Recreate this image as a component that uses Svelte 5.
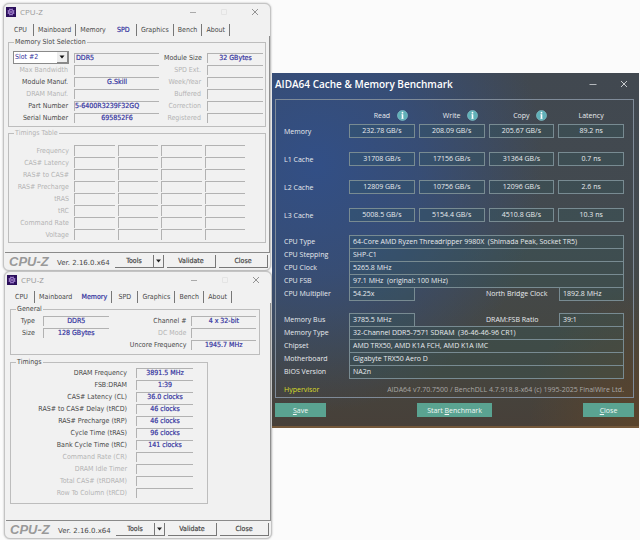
<script>
  const slotRows = [
    ['Max Bandwidth', '', 'SPD Ext.', ''],
    ['Module Manuf.', 'G.Skill', 'Week/Year', ''],
    ['DRAM Manuf.', '', 'Buffered', ''],
    ['Part Number', '5-6400R3239F32GQ', 'Correction', ''],
    ['Serial Number', '695852F6', 'Registered', '']
  ];
  const spdTimings = ['Frequency', 'CAS# Latency', 'RAS# to CAS#', 'RAS# Precharge', 'tRAS', 'tRC', 'Command Rate', 'Voltage'];
  const timings = [
    ['DRAM Frequency', '3891.5 MHz'],
    ['FSB:DRAM', '1:39'],
    ['CAS# Latency (CL)', '36.0 clocks'],
    ['RAS# to CAS# Delay (tRCD)', '46 clocks'],
    ['RAS# Precharge (tRP)', '46 clocks'],
    ['Cycle Time (tRAS)', '96 clocks'],
    ['Bank Cycle Time (tRC)', '141 clocks'],
    ['Command Rate (CR)', ''],
    ['DRAM Idle Timer', ''],
    ['Total CAS# (tRDRAM)', ''],
    ['Row To Column (tRCD)', '']
  ];
  const tabs = ['CPU', 'Mainboard', 'Memory', 'SPD', 'Graphics', 'Bench', 'About'];
  const bench = [
    ['Memory', '232.78 GB/s', '208.09 GB/s', '205.67 GB/s', '89.2 ns'],
    ['L1 Cache', '31708 GB/s', '17156 GB/s', '31364 GB/s', '0.7 ns'],
    ['L2 Cache', '12809 GB/s', '10756 GB/s', '12096 GB/s', '2.6 ns'],
    ['L3 Cache', '5008.5 GB/s', '5154.4 GB/s', '4510.8 GB/s', '10.3 ns']
  ];
  const cpuSpecs = [
    ['CPU Type', '64-Core AMD Ryzen Threadripper 9980X  (Shimada Peak, Socket TR5)'],
    ['CPU Stepping', 'SHP-C1'],
    ['CPU Clock', '5265.8 MHz'],
    ['CPU FSB', '97.1 MHz  (original: 100 MHz)'],
    ['CPU Multiplier', '54.25x', 'North Bridge Clock', '1892.8 MHz']
  ];
  const memSpecs = [
    ['Memory Bus', '3785.5 MHz', 'DRAM:FSB Ratio', '39:1'],
    ['Memory Type', '32-Channel DDR5-7571 SDRAM  (36-46-46-96 CR1)'],
    ['Chipset', 'AMD TRX50, AMD K1A FCH, AMD K1A IMC'],
    ['Motherboard', 'Gigabyte TRX50 Aero D'],
    ['BIOS Version', 'NA2n']
  ];
</script>

{#snippet titlebar()}
  <header class="titlebar">
    <svg class="chip" viewBox="0 0 10 10" aria-hidden="true">
      <rect width="10" height="10" fill="#2c105c" />
      <path d="M3.5 1.5v7M5 1.3v7.4M6.5 1.5v7M1.5 3.5h7M1.3 5h7.4M1.5 6.5h7" stroke="#a884d8" stroke-width=".6" />
      <circle cx="5" cy="5" r="2.5" fill="#48217f" stroke="#c3a6ea" stroke-width=".8" />
      <path d="M3.4 5h3.2" stroke="#e0d0f6" stroke-width=".8" />
    </svg>
    <h2>CPU-Z</h2>
    <button class="cap" aria-label="Minimize"><svg viewBox="0 0 8 8"><path d="M1 4.5h6" stroke="#aaa" /></svg></button>
    <button class="cap" aria-label="Maximize"><svg viewBox="0 0 8 8"><path d="M1.5 1.5h5v5h-5z" stroke="#e4e4e4" fill="none" /></svg></button>
    <button class="cap" aria-label="Close window"><svg viewBox="0 0 8 8"><path d="M1 1l6 6M7 1l-6 6" stroke="#888" stroke-width=".9" /></svg></button>
  </header>
{/snippet}

{#snippet tabbar(active)}
  <div class="tabs" role="tablist">
    {#each tabs as t, i}
      <button role="tab" class="tab" class:active={t === active} class:before={tabs[i + 1] === active} aria-selected={t === active}>{t}</button>
    {/each}
  </div>
{/snippet}

{#snippet footer()}
  <footer class="foot">
    <strong class="logo">CPU-Z</strong>
    <span class="ver">Ver. 2.16.0.x64</span>
    <div class="split">
      <button class="btn">Tools</button>
      <button class="btn drop" aria-label="More tools"><svg viewBox="0 0 5 4"><path d="M0 .5h5L2.5 3.5z" fill="#222" /></svg></button>
    </div>
    <button class="btn">Validate</button>
    <button class="btn">Close</button>
  </footer>
{/snippet}

{#snippet specs(rows)}
  <dl class="specs">
    {#each rows as r}
      <dt>{r[0]}</dt>
      {#if r[2]}
        <dd>{r[1]}</dd>
        <dt class="second">{r[2]}</dt>
        <dd>{r[3]}</dd>
      {:else}
        <dd class="wide">{r[1]}</dd>
      {/if}
    {/each}
  </dl>
{/snippet}

<main class="desktop">
  <div class="left">
    <section class="win first">
      {@render titlebar()}
      {@render tabbar('SPD')}
      <div class="page">
        <fieldset class="slots">
          <legend>Memory Slot Selection</legend>
          <div class="slotgrid">
            <div class="pick">
              <select aria-label="Memory slot"><option>Slot #2</option></select>
              <svg viewBox="0 0 5 4" aria-hidden="true"><path d="M0 .5h5L2.5 3.5z" fill="#111" /></svg>
            </div>
            <span class="field start">DDR5</span>
            <span class="label">Module Size</span>
            <span class="field">32 GBytes</span>
            {#each slotRows as r}
              <span class="label" class:off={!r[1]}>{r[0]}</span>
              <span class="field" class:long={r[1].length > 12}>{r[1]}</span>
              <span class="label off">{r[2]}</span>
              <span class="field">{r[3]}</span>
            {/each}
          </div>
        </fieldset>
        <fieldset class="table">
          <legend class="off">Timings Table</legend>
          <table class="spd">
            <tbody>
              {#each spdTimings as t}
                <tr>
                  <th scope="row">{t}</th>
                  {#each [0, 1, 2, 3] as c (c)}<td><span class="field"></span></td>{/each}
                </tr>
              {/each}
            </tbody>
          </table>
        </fieldset>
      </div>
      {@render footer()}
    </section>

    <section class="win second-win">
      {@render titlebar()}
      {@render tabbar('Memory')}
      <div class="page">
        <fieldset class="general">
          <legend>General</legend>
          <div class="gengrid">
            <span class="label">Type</span><span class="field">DDR5</span>
            <span class="label">Channel #</span><span class="field">4 x 32-bit</span>
            <span class="label">Size</span><span class="field">128 GBytes</span>
            <span class="label off">DC Mode</span><span class="field"></span>
            <span class="label uncore">Uncore Frequency</span><span class="field">1945.7 MHz</span>
          </div>
        </fieldset>
        <fieldset class="timings">
          <legend>Timings</legend>
          <div class="timegrid">
            {#each timings as [k, v]}
              <span class="label" class:off={!v}>{k}</span>
              <span class="field">{v}</span>
            {/each}
          </div>
        </fieldset>
      </div>
      {@render footer()}
    </section>
  </div>

  <section class="aida">
    <header class="atitle">
      <h1>AIDA64 Cache &amp; Memory Benchmark</h1>
      <button class="cap" aria-label="Minimize"><svg viewBox="0 0 8 8"><path d="M.5 4.5h7" stroke="#b4b8bc" /></svg></button>
      <button class="cap" aria-label="Close window"><svg viewBox="0 0 8 8"><path d="M1 1l6 6M7 1l-6 6" stroke="#d8dadc" stroke-width=".9" /></svg></button>
    </header>
    <div class="panel">
      <table class="bench">
        <thead>
          <tr>
            <td></td>
            {#each ['Read', 'Write', 'Copy', 'Latency'] as h}
              <th scope="col">
                <div class="colhead">
                  <span class="name">{h}</span>
                  {#if h !== 'Latency'}
                    <svg class="info" viewBox="0 0 11 11" aria-hidden="true">
                      <circle cx="5.5" cy="5.5" r="5" fill="#5fb0b8" stroke="#8cc9d0" stroke-width=".6" />
                      <circle cx="5.5" cy="2.7" r=".9" fill="#fff" />
                      <path d="M5.5 4.3v4.4" stroke="#fff" stroke-width="1.6" />
                      <path d="M4.4 4.6h1.2M4.4 8.5h2.2" stroke="#fff" stroke-width=".5" />
                    </svg>
                  {/if}
                </div>
              </th>
            {/each}
          </tr>
        </thead>
        <tbody>
          {#each bench as [name, ...vals]}
            <tr>
              <th scope="row">{name}</th>
              {#each vals as v}<td><span class="box">{v}</span></td>{/each}
            </tr>
          {/each}
        </tbody>
      </table>
      {@render specs(cpuSpecs)}
      {@render specs(memSpecs)}
      <div class="credits">
        <span class="hyper">Hypervisor</span>
        <span>AIDA64 v7.70.7500 / BenchDLL 4.7.918.8-x64 (c) 1995-2025 FinalWire Ltd.</span>
      </div>
    </div>
    <div class="actions">
      <button><u>S</u>ave</button>
      <button class="startb">Start <u>B</u>enchmark</button>
      <button><u>C</u>lose</button>
    </div>
  </section>
</main>

<style>
  :global(body) { margin: 0; background: #fbfbfb; }
  * { box-sizing: border-box; }
  button { font: inherit; color: inherit; background: none; border: 0; padding: 0; margin: 0; }
  svg { display: block; }
  .desktop { display: flex; align-items: flex-start; padding: 3px 1px 2px 0; }
  .left { flex: 0 0 272px; font: 7px/12px "DejaVu Sans Condensed", "DejaVu Sans", sans-serif; color: #484848; }

  .win { background: #f1f1f1; border: 1px solid #c4c4c4; border-radius: 6px; box-shadow: 0 0 2px #aaa; }
  .first { margin: 0 1px 0 3px; }
  .second-win { margin: 0 0 0 4px; }
  .titlebar { display: flex; align-items: center; height: 15px; padding-left: 2px; }
  .chip { width: 10px; height: 10px; }
  h2 { flex: 1; margin: 0 0 0 4px; font: 8px/14px "Open Sans", sans-serif; color: #999; }
  .cap { display: grid; place-items: center; width: 31px; height: 14px; }
  .cap svg { width: 8px; height: 8px; }
  .tabs { display: flex; margin: 5px 40px 0 4px; height: 12px; }
  .second-win .tabs { margin-top: 4px; margin-right: 39px; }
  .tab { flex: 1 1 auto; min-width: 26px; text-align: center; padding: 0 3px; border-right: 1px solid #777; }
  .tab.active { color: #3434a0; -webkit-text-stroke: .2px #3434a0; }
  .tab.before { border-right-color: transparent; }
  .page { margin-left: 1px; padding: 2px 3px 9px 3px; border-right: 1px solid #8e8e8e; border-bottom: 1px solid #8a8a8a; }
  .second-win .page { padding: 2px 3px 16px 4px; }

  fieldset { min-width: 0; margin: 0; border: 1px solid #bdbdbd; padding: 6px 2px 2px 4px; }
  legend { margin-left: 1px; padding: 0 1px; line-height: 8px; }
  .label { text-align: right; padding-right: 1px; white-space: nowrap; }
  .off, .spd th { color: #b4b4b4; }
  .field { display: block; height: 10px; margin-top: 1px; border: solid #b2b2b2; border-width: 1px 0 0 1px; color: #3434a0; line-height: 9px; text-align: center; white-space: nowrap; -webkit-text-stroke: .2px #3434a0; }
  .start { text-align: left; padding-left: 1px; }
  .long { text-align: left; }
  .slotgrid { display: grid; grid-template-columns: 56px 85fr 38px 56fr; column-gap: 5px; grid-auto-rows: 12px; }
  .pick { position: relative; height: 13px; margin-top: -1px; }
  select { display: block; width: 100%; height: 13px; appearance: none; border: 1px solid #8a8a8a; border-radius: 0; background: #fff; font: inherit; line-height: 11px; color: #3434a0; padding: 0 0 0 1px; margin: 0; }
  .pick svg { position: absolute; right: 1px; top: 1px; width: 11px; height: 11px; padding: 3px 2px; background: #eee; border: solid #888; border-width: 0 1px 1px 0; pointer-events: none; overflow: visible; }
  .table { margin-top: 2px; padding: 8px 20px 1px 0; }
  .table legend { margin-left: 5px; }
  table { border-collapse: collapse; table-layout: fixed; width: 100%; }
  td, th { padding: 0; font-weight: normal; }
  .spd th { width: 62px; padding-right: 2px; text-align: right; height: 12px; }
  .spd td { height: 12px; vertical-align: top; padding-left: 3px; }
  .spd .field { margin-top: 0; height: 11px; }
  .general { margin-right: 7px; padding: 2px 3px 3px 4px; }
  .gengrid { display: grid; grid-template-columns: 20px 67fr 66px 67fr; column-gap: 8px; grid-auto-rows: 12px; }
  .gengrid .label { padding: 0; }
  .gengrid .label:nth-child(4n + 3), .gengrid .uncore { margin-right: -4px; }
  .gengrid .uncore { grid-column: 1 / 4; }
  .timings { margin: 3px 59px 0 0; padding: 1px 14px 4px 4px; }
  .timegrid { display: grid; grid-template-columns: 1fr 57px; column-gap: 8px; grid-auto-rows: 12px; }

  .foot { display: flex; align-items: center; gap: 3px; height: 17px; padding: 0 2px 0 5px; }
  .logo { flex: 0 0 45px; font: italic bold 13px/15px "Liberation Sans", sans-serif; color: #999; }
  .ver { flex: 1; font: 7px/12px "DejaVu Sans", sans-serif; white-space: nowrap; padding-top: 3px; }
  .btn { width: 49px; height: 13px; border: solid #777; border-width: 0 1px 1px 0; -webkit-text-stroke: .2px #484848; }
  .split { display: flex; width: 49px; }
  .split .btn { width: 39px; }
  .split .drop { width: 10px; display: grid; place-items: center; }
  .drop svg { width: 5px; height: 4px; }

  .aida {
    flex: 1; min-width: 0; margin-top: 70px; padding: 0 5px 9px 3px;
    border-bottom: 2px solid #74583a;
    font: 7px/13px "Open Sans", "Noto Sans", sans-serif; color: #e8ebee;
    background:
      radial-gradient(ellipse 62% 70% at 12% 26%, #324f86 0%, #324f86b0 45%, #324f8600 100%),
      radial-gradient(ellipse 30% 40% at 100% 100%, #5a442c 0%, #5a442c00 100%),
      linear-gradient(180deg, #414850 0%, #434a4f 45%, #454640 80%, #474039 100%);
  }
  .atitle { display: flex; align-items: center; height: 26px; padding-bottom: 5px; margin-right: -5px; }
  h1 { flex: 1; margin: 0; font: 600 10px/14px "Open Sans", "Noto Sans", sans-serif; color: #fff; white-space: nowrap; }
  .panel { border: 1px solid #7f8b99; padding: 8px 7px 0 8px; }
  .bench td, .bench th { padding: 7px 2px; text-align: center; height: 28px; }
  .bench thead td, .bench thead th { height: 14px; padding: 0 2px; }
  .bench tr > :first-child { width: 63px; padding-left: 0; text-align: left; }
  .colhead { display: grid; grid-template-columns: 1fr auto 1fr; align-items: center; height: 13px; }
  .name { grid-column: 2; }
  .info { width: 11px; height: 11px; justify-self: center; }
  .box, dd { display: block; height: 14px; border: 1px solid #788b92; background: #2f5a5c40; line-height: 12px; }
  .bench tbody tr:first-child > * { padding-top: 2px; height: 23px; }
  .specs { display: grid; grid-template-columns: 65px 66px 1fr 73px 65px; grid-auto-rows: 13px; margin: 6px 2px 0 0; }
  .specs + .specs { margin-top: 13px; }
  dt { grid-column: 1; margin: 0; }
  dt.second { grid-column: 4; }
  dd { margin: 0; padding-left: 3px; white-space: pre; }
  dd.wide { grid-column: 2 / -1; }
  .credits { display: flex; justify-content: space-between; margin: 5px 2px 0 0; height: 14px; color: #a9a7a5; white-space: pre; }
  .hyper { color: #d8dc28; }
  .actions { display: flex; justify-content: space-between; padding-top: 5px; }
  .actions button { width: 51px; height: 14px; line-height: 13px; background: #5aa391; color: #f1f7f5; }
  .actions .startb { width: 75px; }
</style>
